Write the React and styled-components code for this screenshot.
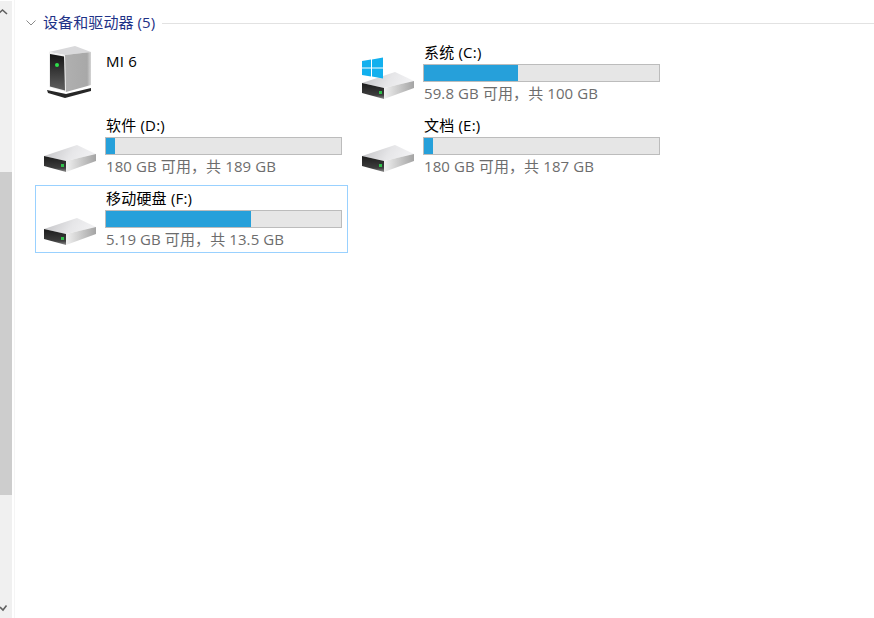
import React from 'react';
import styled, { createGlobalStyle } from 'styled-components';

const Global = createGlobalStyle`
    html, body { margin: 0; padding: 0; background: #fff; height: 100%; overflow: hidden; }
    #root { height: 100%; }
    body { font-family: "Open Sans", "Noto Sans CJK SC", sans-serif; }
`;

const Window = styled.div`
    display: flex;
    width: 874px;
    height: 618px;
    overflow: hidden;
    background: #fff;
`;

const ScrollTrack = styled.div`
    position: relative;
    width: 12px;
    height: 100%;
    flex: none;
    background: #f0f0f0;
    border-top: 1px solid #fff;
    box-sizing: border-box;
`;

const ScrollThumb = styled.div`
    position: absolute;
    left: 0;
    top: 171px;
    width: 12px;
    height: 323px;
    background: #cdcdcd;
`;

const Arrow = styled.svg`
    position: absolute;
    left: 0;
    width: 12px;
    height: 8px;
    top: ${props => props.$top}px;
`;

const Content = styled.main`
    flex: 1;
    margin-left: 2px;
    border-left: 1px solid #f5f5f5;
    padding: 12px 0 0 20px;
`;

const GroupHeader = styled.div`
    display: flex;
    align-items: center;
    height: 22px;
    margin-left: -9px;
`;

const Chevron = styled.svg`
    width: 10px;
    height: 6px;
    flex: none;
    margin-right: 7px;
`;

const GroupTitle = styled.span`
    font-size: 15px;
    line-height: 20px;
    margin-bottom: 3px;
    letter-spacing: 0.1px;
    color: #1e3287;
    white-space: nowrap;
`;

const GroupLine = styled.div`
    flex: 1;
    height: 1px;
    background: #e2e2e2;
    margin-left: 7px;
`;

const Grid = styled.div`
    display: grid;
    grid-template-columns: repeat(2, 313px);
    grid-auto-rows: 68px;
    column-gap: 5px;
    row-gap: 5px;
    margin-top: 5px;
`;

const Tile = styled.div`
    display: flex;
    box-sizing: border-box;
    border: 1px solid ${props => props.$selected ? '#99d1ff' : 'transparent'};
`;

const IconSlot = styled.div`
    width: 69px;
    flex: none;
    display: flex;
    justify-content: center;
    padding-top: ${props => props.$top}px;
    box-sizing: border-box;
`;

const Info = styled.div`
    width: 237px;
    display: flex;
    flex-direction: column;
    padding-top: ${props => props.$phone ? 11 : 2}px;
`;

const Name = styled.div`
    font-size: 15px;
    line-height: 20px;
    height: 20px;
    padding-left: 1px;
    letter-spacing: 0.2px;
    color: #000;
    white-space: nowrap;
`;

const Bar = styled.div`
    width: 237px;
    height: 18px;
    margin-top: 2px;
    box-sizing: border-box;
    border: 1px solid #bcbcbc;
    background: #e6e6e6;
`;

const Fill = styled.div`
    height: 100%;
    background: #26a0da;
`;

const Free = styled.div`
    font-size: 15px;
    line-height: 20px;
    margin-top: 1px;
    padding-left: 1px;
    letter-spacing: 0.1px;
    color: #6d6d6d;
    white-space: nowrap;
`;

const Soft = styled.svg`
    filter: blur(0.35px);
`;

const DriveIcon = ({ windows, id }) => (
    <Soft width="62" height="52" viewBox="0 0 62 52">
        <defs>
            <linearGradient id={`top${id}`} x1="0" y1="0" x2="1" y2="0.2">
                <stop offset="0" stopColor="#bfbfc2" />
                <stop offset="0.6" stopColor="#e6e6e8" />
                <stop offset="1" stopColor="#f1f1f3" />
            </linearGradient>
            <linearGradient id={`side${id}`} x1="0" y1="0" x2="1" y2="0">
                <stop offset="0" stopColor="#f0f0f0" />
                <stop offset="1" stopColor="#a4a4a4" />
            </linearGradient>
            <linearGradient id={`face${id}`} x1="0" y1="0" x2="0" y2="1">
                <stop offset="0" stopColor="#1c1c1c" />
                <stop offset="0.75" stopColor="#3d3d3d" />
                <stop offset="1" stopColor="#8f8f8f" />
            </linearGradient>
        </defs>
        <path d="M4 27 L37 16 L56 25 L26 32 Z" fill={`url(#top${id})`} />
        <path d="M4 27 L26 32 L26 43 L4 37 Z" fill={`url(#face${id})`} />
        <path d="M26 32 L56 25 L56 32 L26 43 Z" fill={`url(#side${id})`} />
        <rect x="21" y="35" width="3" height="3" fill="#2fc04a" />
        {windows && (
            <g fill="#12b0ee">
                <path d="M4 5 L13 3.6 L13 11.5 L4 11.5 Z" />
                <path d="M14 3.4 L25 1.5 L25 11.5 L14 11.5 Z" />
                <path d="M4 12.5 L13 12.5 L13 20.5 L4 19 Z" />
                <path d="M14 12.5 L25 12.5 L25 22.5 L14 20.6 Z" />
            </g>
        )}
    </Soft>
);

const PhoneDriveIcon = () => (
    <Soft width="49" height="56" viewBox="0 0 49 56">
        <defs>
            <linearGradient id="phoneFront" x1="0" y1="0" x2="0" y2="1">
                <stop offset="0" stopColor="#141414" />
                <stop offset="1" stopColor="#606060" />
            </linearGradient>
            <linearGradient id="phoneSide" x1="0" y1="0" x2="1" y2="0">
                <stop offset="0" stopColor="#b0b0b0" />
                <stop offset="0.85" stopColor="#a8a8a8" />
                <stop offset="1" stopColor="#d4d4d4" />
            </linearGradient>
        </defs>
        <path d="M1 45 L20 49 L45 43 L45 46 L19 53 L2 48 Z" fill="#262626" />
        <path d="M3 7 L29 1 L45 7 L19 10 Z" fill="#d9d9db" />
        <path d="M3 7 L19 10 L20 47 L3 42 Z" fill="#f0f0f0" />
        <path d="M4 9 L18 11.5 L19 45.5 L4 41.5 Z" fill="url(#phoneFront)" />
        <path d="M19 10 L45 7 L45 40 L20 47 Z" fill="url(#phoneSide)" />
        <circle cx="11" cy="20" r="2" fill="#2ee04a" />
    </Soft>
);

const drives = [
    { name: 'MI 6', phone: true },
    { name: '系统 (C:)', free: '59.8 GB 可用，共 100 GB', used: 40, windows: true },
    { name: '软件 (D:)', free: '180 GB 可用，共 189 GB', used: 4 },
    { name: '文档 (E:)', free: '180 GB 可用，共 187 GB', used: 3.8 },
    { name: '移动硬盘 (F:)', free: '5.19 GB 可用，共 13.5 GB', used: 61.6, selected: true },
];

const App = () => (
    <Window>
        <Global />
        <ScrollTrack>
            <ScrollThumb />
            <Arrow $top={6} viewBox="0 0 12 8">
                <path d="M-2 7 L2.5 3 L7 7" fill="none" stroke="#606060" strokeWidth="1.6" />
            </Arrow>
            <Arrow $top={603} viewBox="0 0 12 8">
                <path d="M0 3 L3 6 L6.5 1.5" fill="none" stroke="#606060" strokeWidth="1.6" />
            </Arrow>
        </ScrollTrack>
        <Content>
            <GroupHeader>
                <Chevron viewBox="0 0 10 6">
                    <path d="M0.5 0.5 L5 5 L9.5 0.5" fill="none" stroke="#8a8a8a" strokeWidth="1" />
                </Chevron>
                <GroupTitle>设备和驱动器 (5)</GroupTitle>
                <GroupLine />
            </GroupHeader>
            <Grid>
                {drives.map((drive, index) => (
                    <Tile key={index} $selected={drive.selected}>
                        <IconSlot $top={drive.phone ? 5 : 16}>
                            {drive.phone ? <PhoneDriveIcon /> : <DriveIcon windows={drive.windows} id={index} />}
                        </IconSlot>
                        <Info $phone={drive.phone}>
                            <Name>{drive.name}</Name>
                            {!drive.phone && (
                                <>
                                    <Bar><Fill style={{ width: `${drive.used}%` }} /></Bar>
                                    <Free>{drive.free}</Free>
                                </>
                            )}
                        </Info>
                    </Tile>
                ))}
            </Grid>
        </Content>
    </Window>
);

export default App;
